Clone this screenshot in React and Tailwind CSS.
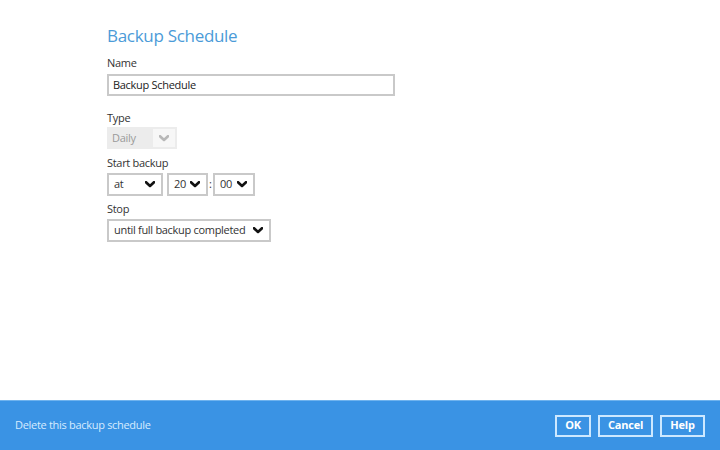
const Chevron = ({ className = "" }) => (
  <svg viewBox="0 0 10 7" className={className} width="10" height="7">
    <path d="M1 1.2 L5 5 L9 1.2" fill="none" stroke="currentColor" strokeWidth="2.6" strokeLinecap="round" strokeLinejoin="round" />
  </svg>
);

const Select = ({ value, width }) => (
  <div className={`flex h-[23px] items-center justify-between whitespace-nowrap border-2 border-[#c9c9c9] bg-white pl-[5px] pr-[6px] text-[11px] tracking-[-0.3px] text-[#333] ${width}`}>
    <span>{value}</span>
    <Chevron className="text-[#111]" />
  </div>
);

const Label = ({ children, className = "" }) => (
  <p className={`text-[11px] leading-[14px] tracking-[-0.3px] text-[#333] ${className}`}>{children}</p>
);

const FooterButton = ({ children, width }) => (
  <button className={`flex h-[22px] items-center justify-center border-2 border-[#cde8ff] text-[11px] font-bold tracking-[-0.2px] text-white ${width}`}>
    {children}
  </button>
);

export default function App() {
  return (
    <div className="flex h-[450px] w-[720px] flex-col bg-white font-['Open_Sans',sans-serif]">
      <main className="flex-1 pl-[107px] pt-[24px]">
        <h1 className="text-[17px] leading-[24px] tracking-[-0.3px] text-[#4b9bd8]">Backup Schedule</h1>

        <Label className="mt-[8px]">Name</Label>
        <div className="mt-[4px] flex h-[22px] w-[288px] items-center border-2 border-[#c9c9c9] px-[4px] text-[11px] tracking-[-0.3px] text-[#222]">
          Backup Schedule
        </div>

        <Label className="mt-[15px]">Type</Label>
        <div className="mt-[2px] flex h-[22px] w-[70px] border-2 border-[#ececec] text-[11px] tracking-[-0.3px] text-[#9a9a9a]">
          <div className="flex flex-1 items-center bg-[#ececec] pl-[3px]">Daily</div>
          <div className="flex w-[22px] items-center justify-center bg-[#f7f7f7]">
            <Chevron className="text-[#b8b8b8]" />
          </div>
        </div>

        <Label className="mt-[7px]">Start backup</Label>
        <div className="mt-[3px] flex items-center">
          <Select value="at" width="w-[56px]" />
          <div className="ml-[4px]">
            <Select value="20" width="w-[41px]" />
          </div>
          <span className="mx-[1px] text-[11px] text-[#333]">:</span>
          <Select value="00" width="w-[42px]" />
        </div>

        <Label className="mt-[6px]">Stop</Label>
        <div className="mt-[3px]">
          <Select value="until full backup completed" width="w-[164px]" />
        </div>
      </main>

      <footer className="flex h-[50px] items-center justify-between border-t border-[#6fb3ee] bg-[#3a93e4] pl-[15px] pr-[15px]">
        <span className="text-[11px] tracking-[-0.3px] text-[#d6ebff]">Delete this backup schedule</span>
        <div className="flex gap-[7px]">
          <FooterButton width="w-[36px]">OK</FooterButton>
          <FooterButton width="w-[55px]">Cancel</FooterButton>
          <FooterButton width="w-[45px]">Help</FooterButton>
        </div>
      </footer>
    </div>
  );
}
